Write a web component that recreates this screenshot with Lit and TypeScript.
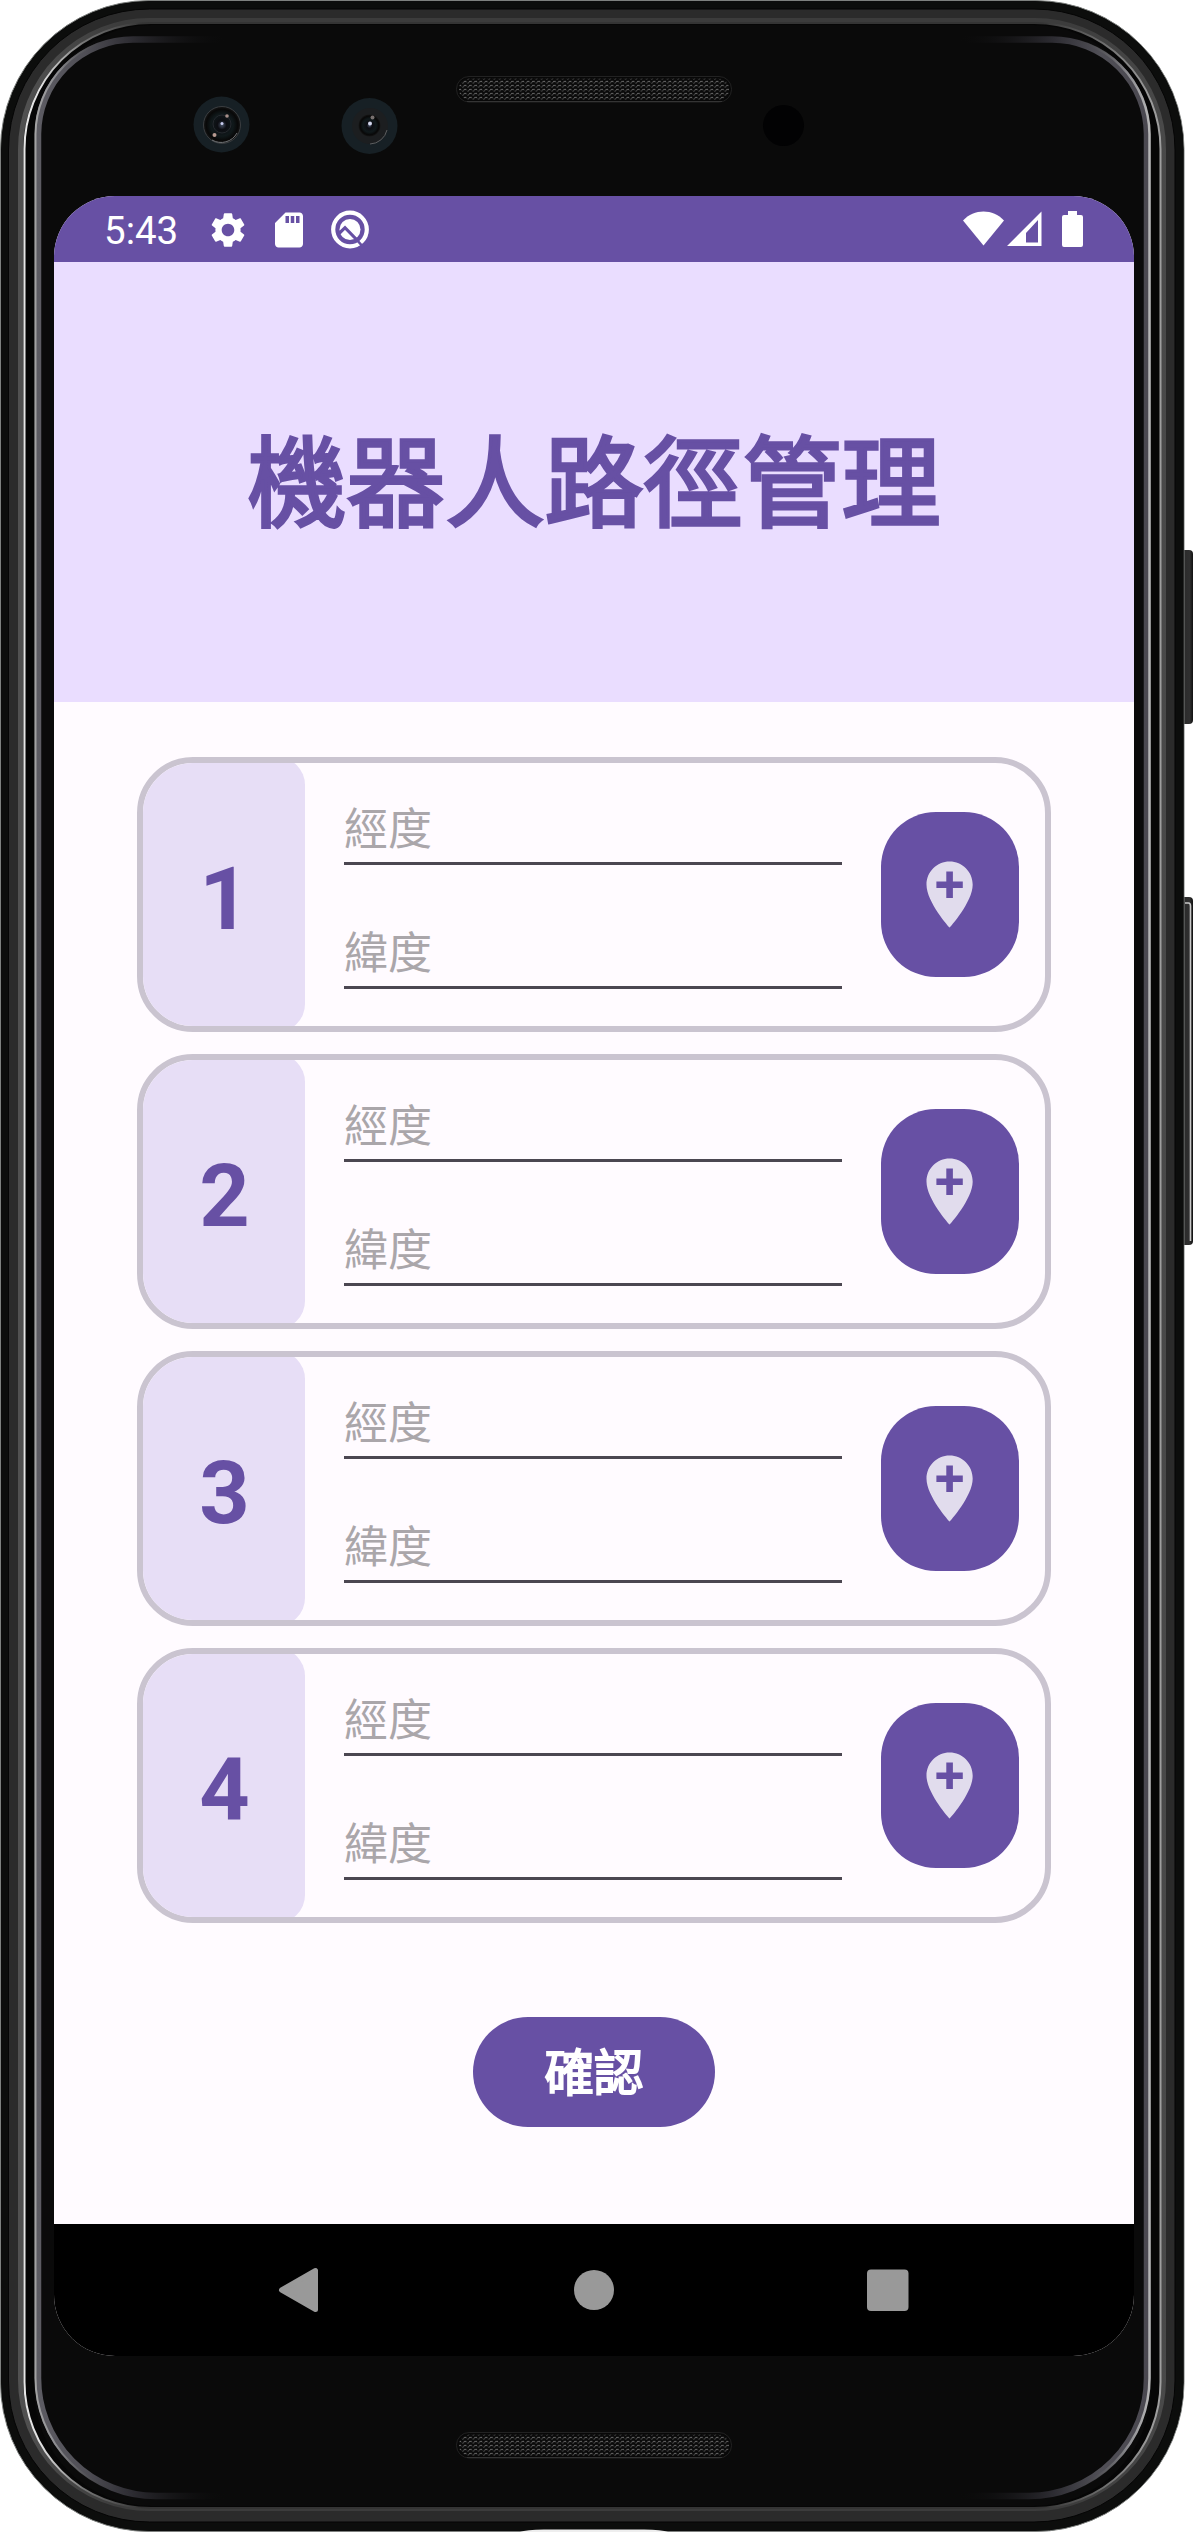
import { LitElement, html, css } from "lit";
import { customElement, property } from "lit/decorators.js";

@customElement("device-frame")
class DeviceFrame extends LitElement {
  static styles = css`
    :host { display: block; }
    .frame { display: block; }
  `;
  render() {
    const side = "M594 39.5H133A95 95 0 0 0 38 134V2377A118 118 0 0 0 156 2496H594";
    const sideRight = "M594 39.5H1052A95 95 0 0 1 1147 134V2377A118 118 0 0 1 1029 2496H594";
    return html`<svg class="frame" width="1194" height="2532" viewBox="0 0 1194 2532" fill="none">
      <defs>
        <linearGradient id="rim" gradientUnits="userSpaceOnUse" x1="0" y1="0" x2="1184" y2="0">
          <stop offset="0" stop-color="#f4f4f4" /><stop offset=".035" stop-color="#e0e0e0" />
          <stop offset=".07" stop-color="#777" /><stop offset=".12" stop-color="#343434" />
          <stop offset=".88" stop-color="#343434" /><stop offset=".94" stop-color="#777" />
          <stop offset=".97" stop-color="#999" /><stop offset="1" stop-color="#aaa" />
        </linearGradient>
        <linearGradient id="soft" gradientUnits="userSpaceOnUse" x1="0" y1="0" x2="1184" y2="0">
          <stop offset="0" stop-color="#555" /><stop offset=".1" stop-color="#3c3c3c" />
          <stop offset=".9" stop-color="#3c3c3c" /><stop offset="1" stop-color="#4c4c4c" />
        </linearGradient>
        <linearGradient id="glassL" gradientUnits="userSpaceOnUse" x1="38" y1="0" x2="228" y2="0">
          <stop offset="0" stop-color="#5d5c63" /><stop offset=".25" stop-color="#504f56" />
          <stop offset=".5" stop-color="#2c2b31" /><stop offset="1" stop-color="#0a0a0a" stop-opacity="0" />
        </linearGradient>
        <linearGradient id="edgeL" gradientUnits="userSpaceOnUse" x1="34" y1="0" x2="110" y2="0">
          <stop offset="0" stop-color="#a4a4a4" /><stop offset=".3" stop-color="#8c8c90" />
          <stop offset="1" stop-color="#333" stop-opacity="0" />
        </linearGradient>
        <linearGradient id="glassR" gradientUnits="userSpaceOnUse" x1="1147" y1="0" x2="957" y2="0">
          <stop offset="0" stop-color="#4a4850" /><stop offset=".25" stop-color="#504f56" />
          <stop offset=".5" stop-color="#2c2b31" /><stop offset="1" stop-color="#0a0a0a" stop-opacity="0" />
        </linearGradient>
        <linearGradient id="edgeR" gradientUnits="userSpaceOnUse" x1="1151" y1="0" x2="1075" y2="0">
          <stop offset="0" stop-color="#b8b8b8" /><stop offset=".3" stop-color="#8c8c90" />
          <stop offset="1" stop-color="#333" stop-opacity="0" />
        </linearGradient>
        <linearGradient id="key" x1="0" y1="0" x2="1" y2="0">
          <stop offset="0" stop-color="#111" /><stop offset=".2" stop-color="#2b2b2b" />
          <stop offset=".75" stop-color="#303030" /><stop offset="1" stop-color="#101010" />
        </linearGradient>
        <radialGradient id="lens" cx=".5" cy=".5" r=".5">
          <stop offset="0" stop-color="#465064" /><stop offset=".25" stop-color="#0c0d12" />
          <stop offset=".6" stop-color="#10191b" /><stop offset=".85" stop-color="#080808" />
          <stop offset="1" stop-color="#161616" />
        </radialGradient>
        <pattern id="mesh" width="5.25" height="4" patternUnits="userSpaceOnUse">
          <rect width="5.25" height="4" fill="#0a0a0a" />
          <path d="M.5 3.500L3.200 .8M3.200 .8L4.700 2.300" stroke="#6e6e6e" stroke-width="1" stroke-dasharray="1.400 .6" />
        </pattern>
      </defs>

      <rect x="1180" y="550" width="13" height="174" rx="4" fill="url(#key)" />
      <rect x="1180" y="897" width="13" height="348" rx="4" fill="url(#key)" />
      <path d="M1185 903H1188.500Q1190.500 903 1190.500 906V1241" stroke="#c9c9c9" stroke-width="1.600" />

      <rect x=".5" y=".5" width="1183.500" height="2531" rx="149" fill="#0c0d0c" stroke="#7d807e" />
      <rect x="1.500" y="1.500" width="1182" height="2529" rx="148" fill="#0c0d0c" />
      <rect x="8.500" y="9" width="1166.500" height="2513" rx="141" fill="#2b2b2b" stroke="#050505" />
      <rect x="20.500" y="20.500" width="1143" height="2488" rx="129" stroke="url(#soft)" stroke-width="5" />
      <rect x="24.500" y="23" width="1136" height="2485" rx="126" fill="#060606" stroke="url(#rim)" stroke-width="2" />
      <rect x="34" y="25" width="1117" height="2481" rx="118" fill="#0a0a0a" />
      <path d=${side} stroke="url(#glassL)" stroke-width="6.500" />
      <path d=${sideRight} stroke="url(#glassR)" stroke-width="6.500" />
      <path d="M133 37A98 98 0 0 0 35.500 134V2377A120 120 0 0 0 156 2498" stroke="url(#edgeL)" stroke-width="2" />
      <path d="M1052 37A98 98 0 0 1 1149.500 134V2377A120 120 0 0 1 1029 2498" stroke="url(#edgeR)" stroke-width="2.500" />

      <rect x="456.500" y="76.500" width="275" height="25.500" rx="12.500" fill="#080808" stroke="#222" />
      <rect x="459" y="78.500" width="270" height="21.500" rx="10.500" fill="url(#mesh)" />
      <path d="M467 101.500H722" stroke="#343434" />
      <rect x="456.500" y="2432.500" width="275" height="25.500" rx="12.500" fill="#080808" stroke="#222" />
      <rect x="459" y="2434.500" width="270" height="21.500" rx="10.500" fill="url(#mesh)" />
      <path d="M467 2457.500H722" stroke="#343434" />
      <circle cx="783.500" cy="125.500" r="20.500" fill="#020203" />

      <g>
        <circle cx="221.500" cy="124.500" r="28" fill="#172025" />
        <circle cx="222" cy="125" r="18.500" fill="url(#lens)" stroke="#3a3d40" />
        <path d="M212 140a18 18 0 0 0 25-7" stroke="#6f7376" stroke-width="1" />
        <circle cx="222" cy="124" r="9" stroke="#25292e" />
        <circle cx="222" cy="123.500" r="1.500" fill="#c9cdf0" />
        <circle cx="227" cy="116" r="1.800" fill="#a88f8a" />
        <circle cx="214.500" cy="135" r="2" fill="#b79a91" />
      </g>
      <g>
        <circle cx="369.500" cy="126" r="28" fill="#172025" />
        <circle cx="370" cy="126" r="18" fill="#1c1e20" />
        <circle cx="369.500" cy="125.500" r="11" fill="url(#lens)" />
        <path d="M370 144a18 18 0 0 0 17-14" stroke="#5c5e60" stroke-width="1" />
        <circle cx="370" cy="123.500" r="2" fill="#d4d8ee" />
        <circle cx="372.500" cy="117.500" r="2" fill="#77706f" />
      </g>
      <path d="M520 2532Q526 2529.500 544 2529.500H644Q662 2529.500 668 2532Z" fill="#eee" />
    </svg>`;
  }
}

@customElement("status-bar")
class StatusBar extends LitElement {
  static styles = css`
    :host {
      display: flex; align-items: center; height: 66px; box-sizing: border-box;
      padding: 0 48px 0 50px; background: #6750a4; color: #fff;
    }
    .time { font: 400 38.500px/66px Roboto, sans-serif; width: 103px; padding-top: 2px; box-sizing: border-box; height: 66px; }
    .left { display: flex; flex: 1; gap: 19px; align-items: center; padding-top: 1px; }
    .right { display: flex; align-items: center; }
    svg { display: block; }
  `;
  render() {
    return html`
      <span class="time">5:43</span>
      <div class="left">
        <svg width="42" height="42" viewBox="0 0 24 24" fill="#fff">
          <path d="M19.140 12.940c.04-.3.06-.61.06-.94 0-.32-.02-.64-.07-.94l2.030-1.580c.18-.14.23-.41.120-.61l-1.920-3.320c-.12-.22-.37-.29-.59-.22l-2.390.96c-.5-.38-1.030-.7-1.620-.94l-.36-2.540c-.04-.24-.24-.41-.48-.41h-3.840c-.24 0-.43.17-.47.41l-.36 2.540c-.59.24-1.130.57-1.620.94l-2.390-.96c-.22-.08-.47 0-.59.22L2.740 8.870c-.12.21-.08.47.120.61l2.030 1.580c-.05.3-.09.63-.09.94s.02.64.07.94l-2.030 1.580c-.18.14-.23.41-.12.61l1.920 3.320c.12.22.37.29.59.22l2.390-.96c.5.38 1.030.7 1.620.94l.36 2.540c.05.24.24.41.48.41h3.840c.24 0 .44-.17.47-.41l.36-2.540c.59-.24 1.130-.56 1.620-.94l2.390.96c.22.08.47 0 .59-.22l1.920-3.320c.12-.22.07-.47-.12-.61l-2.010-1.580zM12 15.600c-1.980 0-3.600-1.620-3.600-3.600s1.620-3.600 3.600-3.600 3.600 1.620 3.600 3.600-1.620 3.600-3.600 3.600z" />
        </svg>
        <svg width="42" height="42" viewBox="0 0 24 24" fill="#fff">
          <path d="M18 2h-8L4 8v12c0 1.100.9 2 2 2h12c1.100 0 2-.9 2-2V4c0-1.100-.9-2-2-2zm-6 6h-2V4h2v4zm3 0h-2V4h2v4zm3 0h-2V4h2v4z" />
        </svg>
        <svg width="42" height="42" viewBox="0 0 42 42" fill="none">
          <circle cx="21" cy="20.500" r="16.800" stroke="#fff" stroke-width="4.200" />
          <circle cx="21" cy="20.500" r="10.500" fill="#fff" />
          <path d="M9 25.500L16 18.700L29 32" stroke="#6750a4" stroke-width="3.200" />
          <path d="M28 31L34.500 38.500" stroke="#6750a4" stroke-width="2.600" />
        </svg>
      </div>
      <div class="right">
        <svg width="124" height="42" viewBox="0 0 124 42">
          <path d="M1 12.500C12 .4 31 .4 42 12.500L21.500 37.500Z" fill="#fff" />
          <path fill-rule="evenodd" d="M45 38L79.500 3.500V38ZM64 25V34.500H76V12Z" fill="#fff" />
          <path d="M106 3h9v4h4a2 2 0 0 1 2 2v28a2 2 0 0 1-2 2H102a2 2 0 0 1-2-2V9a2 2 0 0 1 2-2h4z" fill="#fff" />
        </svg>
      </div>
    `;
  }
}

@customElement("waypoint-card")
class WaypointCard extends LitElement {
  @property({ type: Number }) index = 1;
  static styles = css`
    :host { display: block; }
    .card {
      display: flex; box-sizing: border-box; width: 914px; height: 275px;
      border: 6px solid #cac4d0; border-radius: 56px; overflow: hidden; background: #fffbff;
    }
    .badge {
      flex: none; display: flex; align-items: center; justify-content: center; box-sizing: border-box;
      width: 168px; height: 275px; margin: -6px 0 0 -6px; padding: 8px 0 0 7px;
      border-radius: 28px; background: #e7def6; color: #6750a4;
      font: 700 88px/1 Roboto, sans-serif;
    }
    .fields { flex: none; width: 498px; margin-left: 39px; padding-top: 30px; }
    .field {
      box-sizing: border-box; height: 72px; margin-bottom: 52px; border-bottom: 3px solid #4b4751;
      font: 400 44px/64px "Noto Sans CJK TC", sans-serif; color: #aaa6aa; padding-top: 1px;
    }
    .add {
      flex: none; display: flex; align-items: center; justify-content: center;
      width: 138px; height: 165px; margin: 49px 0 0 39px; padding: 0; border: 0;
      border-radius: 55px; background: #6750a4;
    }
  `;
  render() {
    return html`<div class="card">
      <div class="badge">${this.index}</div>
      <div class="fields">
        <div class="field">經度</div>
        <div class="field">緯度</div>
      </div>
      <button class="add" aria-label="add location">
        <svg width="79.200" height="79.200" viewBox="0 0 24 24" fill="#e1dced">
          <path d="M12 2C8.140 2 5 5.140 5 9c0 5.250 7 13 7 13s7-7.750 7-13c0-3.860-3.140-7-7-7zm4 8h-3v3h-2v-3H8V8h3V5h2v3h3v2z" />
        </svg>
      </button>
    </div>`;
  }
}

@customElement("nav-bar")
class NavBar extends LitElement {
  static styles = css`
    :host { display: flex; align-items: center; justify-content: center; gap: 252px; height: 132px; background: #000; padding-right: 2px; }
    svg { display: block; }
  `;
  render() {
    return html`
      <svg width="44" height="48" viewBox="0 0 44 48"><path d="M5.500 24L39.500 4.500V43.500Z" fill="#999" stroke="#999" stroke-width="5" stroke-linejoin="round" /></svg>
      <svg width="42" height="42" viewBox="0 0 42 42"><circle cx="22" cy="21" r="20" fill="#999" /></svg>
      <svg width="44" height="44" viewBox="0 0 44 44"><rect x="1" y="1.500" width="41.500" height="41.500" rx="4" fill="#999" /></svg>
    `;
  }
}

@customElement("app-root")
class AppRoot extends LitElement {
  static styles = css`
    :host { display: block; }
    .device { position: relative; box-sizing: border-box; width: 1194px; height: 2532px; padding: 196px 60px 0 54px; background: #fff; overflow: hidden; }
    .bezel { position: absolute; left: 0; top: 0; }
    .screen {
      position: relative; display: flex; flex-direction: column; width: 1080px; height: 2160px;
      border-radius: 61px; overflow: hidden; background: #fffbff;
    }
    .header { flex: none; display: flex; align-items: center; justify-content: center; box-sizing: border-box; height: 440px; padding-bottom: 12px; background: #eaddff; }
    .title {
      margin: 0; font: 400 99px/143px "Noto Sans CJK TC", sans-serif; color: #6750a4;
      -webkit-text-stroke: 3.300px #6750a4;
    }
    .list { flex: 1; display: flex; flex-direction: column; align-items: center; gap: 22px; padding-top: 55px; }
    .confirm {
      width: 242px; height: 110px; margin-top: 72px; padding: 0 0 5px; border: 0; border-radius: 55px;
      background: #6750a4; color: #fff; font: 400 49.500px/72px "Noto Sans CJK TC", sans-serif;
      -webkit-text-stroke: 1.900px #fff;
    }
  `;
  render() {
    return html`<div class="device">
      <device-frame class="bezel"></device-frame>
      <div class="screen">
        <status-bar></status-bar>
        <div class="header"><h1 class="title">機器人路徑管理</h1></div>
        <div class="list">
          ${[1, 2, 3, 4].map((n) => html`<waypoint-card .index=${n}></waypoint-card>`)}
          <button class="confirm">確認</button>
        </div>
        <nav-bar></nav-bar>
      </div>
    </div>`;
  }
}
